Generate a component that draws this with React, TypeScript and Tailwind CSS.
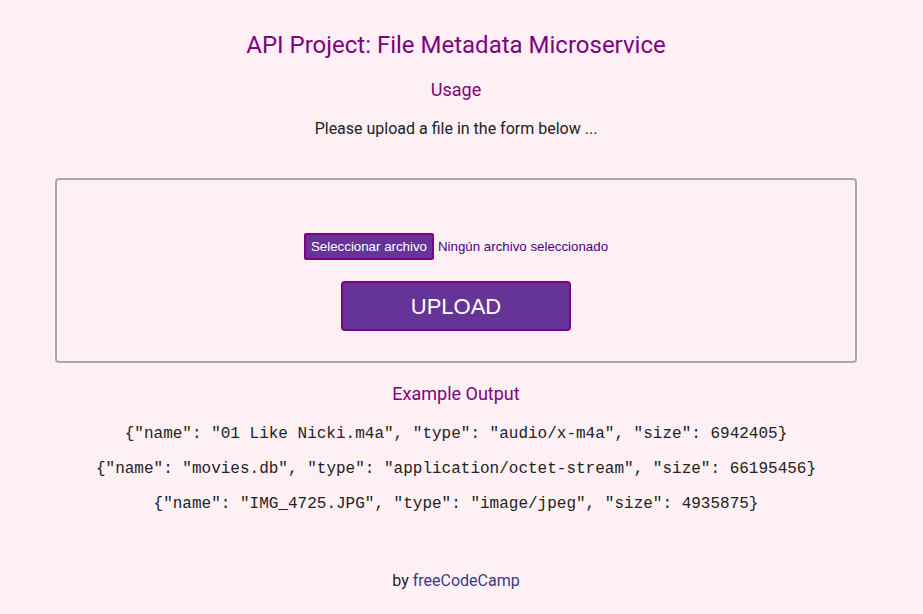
export default function App() {
  const lines = [
    '{"name": "01 Like Nicki.m4a", "type": "audio/x-m4a", "size": 6942405}',
    '{"name": "movies.db", "type": "application/octet-stream", "size": 66195456}',
    '{"name": "IMG_4725.JPG", "type": "image/jpeg", "size": 4935875}',
  ];
  return (
    <div className="min-h-[614px] w-full bg-[#fff0f5] text-[16px] text-[#222] [font-family:Roboto,'Liberation_Sans',sans-serif]">
      <div className="w-[912px] text-center">
        <div className="pt-[31px]">
          <h1 className="text-[24px] leading-[28px] text-[#800080]">API Project: File Metadata Microservice</h1>
          <h3 className="mt-[20px] text-[18px] leading-[22px] text-[#800080]">Usage</h3>
          <p className="mt-[17px] text-[16px] leading-[22px]">Please upload a file in the form below ...</p>
        </div>
        <div className="mx-[55px] mt-[38px] flex h-[185px] flex-col items-center justify-start rounded-[4px] border-2 border-[#aaa] pt-[53px]">
          <div className="flex items-center gap-[4px]">
            <span className="flex h-[27px] items-center rounded-[2px] border-2 border-[#800080] bg-[#663399] px-[5px] text-[13.3px] text-white [font-family:'Liberation_Sans',Arial,sans-serif]">
              Seleccionar archivo
            </span>
            <span className="text-[13.3px] text-[#4b0082] [font-family:'Liberation_Sans',Arial,sans-serif]">Ningún archivo seleccionado</span>
          </div>
          <button className="mt-[21px] h-[50px] w-[230px] rounded-[4px] border-2 border-[#800080] bg-[#663399] text-[22px] text-white [font-family:'Liberation_Sans',Arial,sans-serif]">
            UPLOAD
          </button>
        </div>
        <h3 className="mt-[20px] text-[18px] leading-[22px] text-[#800080]">Example Output</h3>
        <div className="mt-[20px] flex flex-col items-center gap-[17px]">
          {lines.map((l) => (
            <p key={l} className="whitespace-pre text-[16px] leading-[18px] text-[#222] [font-family:'Liberation_Mono','Courier_New',monospace]">
              {l}
            </p>
          ))}
        </div>
        <p className="mt-[58px] text-[16px] leading-[20px]">
          by <a className="text-[#3a3a8c]">freeCodeCamp</a>
        </p>
      </div>
    </div>
  );
}
